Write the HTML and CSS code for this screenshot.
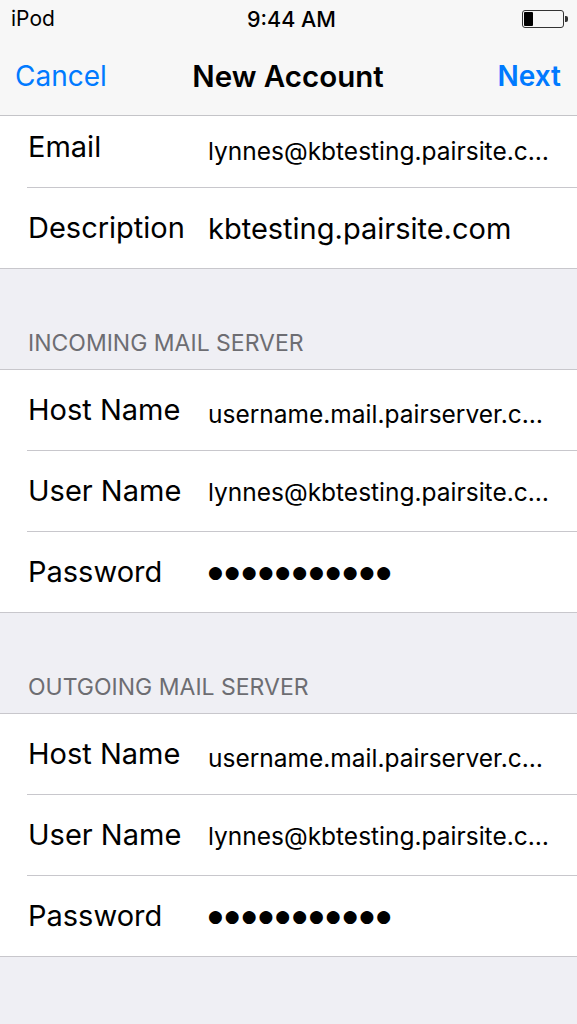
FILE: index.html
```html
<!DOCTYPE html>
<html lang="en">
<head>
  <meta charset="UTF-8">
  <meta name="viewport" content="width=device-width, initial-scale=1.0">
  <title>New Account</title>
  <link rel="stylesheet" href="styles.css">
</head>
<body>

  <header class="top">
    <div class="status-bar">
      <span class="carrier">iPod</span>
      <span class="clock">9:44 AM</span>
      <span class="battery"><span class="battery-level"></span></span>
    </div>
    <nav class="nav-bar">
      <a class="nav-btn" href="#">Cancel</a>
      <h1 class="nav-title">New Account</h1>
      <a class="nav-btn nav-btn-done" href="#">Next</a>
    </nav>
  </header>

  <main class="scroll">
    <div class="scroll-inner">

      <section class="group">
        <div class="row">
          <span class="label">Email</span>
          <span class="value value-small">lynnes@kbtesting.pairsite.c…</span>
        </div>
        <div class="row">
          <span class="label">Description</span>
          <span class="value">kbtesting.pairsite.com</span>
        </div>
      </section>

      <h2 class="group-title">INCOMING MAIL SERVER</h2>
      <section class="group">
        <div class="row">
          <span class="label">Host Name</span>
          <span class="value value-small">username.mail.pairserver.c…</span>
        </div>
        <div class="row">
          <span class="label">User Name</span>
          <span class="value value-small value-user">lynnes@kbtesting.pairsite.c…</span>
        </div>
        <div class="row">
          <span class="label">Password</span>
          <span class="value value-dots">●●●●●●●●●●●</span>
        </div>
      </section>

      <h2 class="group-title">OUTGOING MAIL SERVER</h2>
      <section class="group">
        <div class="row">
          <span class="label">Host Name</span>
          <span class="value value-small">username.mail.pairserver.c…</span>
        </div>
        <div class="row">
          <span class="label">User Name</span>
          <span class="value value-small value-user">lynnes@kbtesting.pairsite.c…</span>
        </div>
        <div class="row">
          <span class="label">Password</span>
          <span class="value value-dots">●●●●●●●●●●●</span>
        </div>
      </section>

    </div>
  </main>

</body>
</html>
```

FILE: styles.css
```css
html, body {
  height: 100%;
}
body {
  margin: 0;
  font-family: Inter, "Liberation Sans", Arial, sans-serif;
  background-color: #efeff4;
  color: #000;
  display: flex;
  flex-direction: column;
  overflow: hidden;
}

/* status + navigation */
.top {
  background-color: #f7f7f7;
  border-bottom: 1px solid #c4c4c8;
  position: relative;
  z-index: 1;
}
.status-bar {
  height: 40px;
  display: flex;
  align-items: center;
  justify-content: space-between;
  padding: 0 10px 3px 11px;
  box-sizing: border-box;
  font-size: 21px;
}
.clock {
  font-weight: 500;
  font-size: 21.5px;
  margin-left: 6px;
}
.battery {
  width: 38px;
  height: 14px;
  border: 1px solid #333;
  border-radius: 3px;
  padding: 1px;
  box-sizing: content-box;
  display: flex;
  position: relative;
  margin-right: 3px;
}
.battery::after {
  content: "";
  position: absolute;
  right: -5px;
  top: 5px;
  width: 3px;
  height: 6px;
  background: #333;
  border-radius: 0 2px 2px 0;
}
.battery-level {
  width: 9px;
  background: #000;
  border-radius: 1px;
}
.nav-bar {
  height: 75px;
  display: flex;
  align-items: center;
  justify-content: space-between;
  padding: 0 16px 3px 15px;
  box-sizing: border-box;
}
.nav-btn {
  color: #007aff;
  text-decoration: none;
  font-size: 28px;
  width: 120px;
}
.nav-btn-done {
  font-weight: 600;
  text-align: right;
}
.nav-title {
  margin: 0;
  font-size: 29.5px;
  font-weight: 600;
}

/* scrolling table */
.scroll {
  flex: 1;
  overflow: hidden;
}
.scroll-inner {
  margin-top: -10px;
}
.group {
  background-color: #fff;
  border-top: 1px solid #c8c7cc;
  border-bottom: 1px solid #c8c7cc;
}
.row {
  height: 80px;
  margin-left: 27px;
  padding-left: 1px;
  display: flex;
  align-items: center;
}
.row + .row {
  border-top: 1px solid #c8c7cc;
}
.label {
  width: 180px;
  flex-shrink: 0;
  font-size: 29px;
  padding-bottom: 2px;
}
.value {
  font-size: 29px;
  white-space: nowrap;
  overflow: hidden;
}
.value-small {
  font-size: 24.5px;
  padding-top: 8px;
}
.value-user {
  padding-top: 2px;
}
.value-dots {
  font-family: "DejaVu Sans", sans-serif;
  font-size: 17px;
  letter-spacing: 2px;
}
.group-title {
  margin: 0;
  height: 100px;
  box-sizing: border-box;
  display: flex;
  align-items: flex-end;
  padding: 0 0 13px 28px;
  font-size: 23px;
  line-height: 26px;
  font-weight: 400;
  color: #6d6d72;
}
```
